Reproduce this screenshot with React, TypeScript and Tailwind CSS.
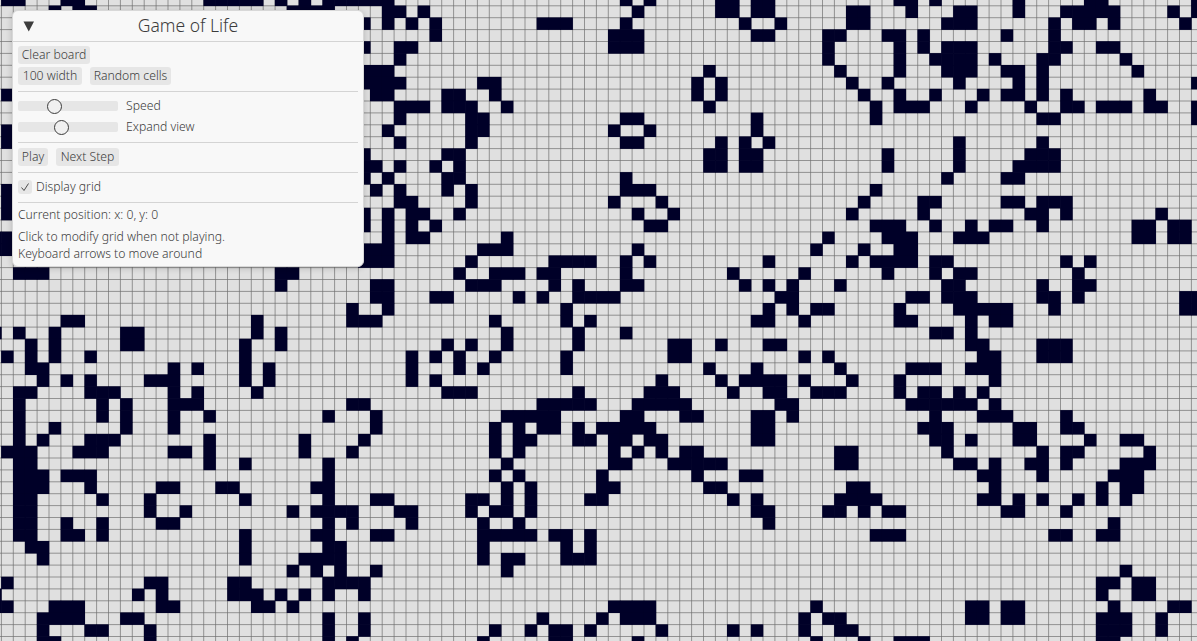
const ROWS = [
  "1-2,6-7,18-22,24,26,28-33,53,55,61-62,64-65,76-77,79,86,92-93,101",
  "5,7-8,25-28,33-34,36,54,61-62,64-65,72-73,77,81-82,86,90-94,99,101",
  "31,33,35,37,46-48,53,63,66,72-73,80-82,89,91-92,94,100",
  "37,52-54,64-65,70-71,75-76,78,85,89",
  "31,34-35,52-54,70,76,78,80-82,89-90,93-94",
  "34,70,76,79-82,84,88-89,95",
  "31-33,60,71,76,80-82,85-86,88,96",
  "31-34,41-42,59,61,72,75,81,86,88,101",
  "1,32-33,38-39,42,59,61,73,76,79,83,85-86,88,90,97",
  "34-36,38-40,43,60,74,76-78,82,87,90-91,93-95,97-98,101",
  "34,40-41,53-54,64,74,88-89,101",
  "1,33,40-41,52,55,64",
  "1,34,40,53-54,61,63,65,81,88",
  "31,38-39,60-61,63-64,75,81,87-89",
  "31-32,34,37,39,60-61,63-64,75,81,86-89",
  "31,33,38-39,53,80,85-86",
  "1,32,34,38,40,53-55,74",
  "1,34-35,40,52,56,73,78-79,85-86,88-90",
  "1,31,33,35-36,39,54,57,72,78,87-88,90,98",
  "31,33,35,37,55-56,74-76,79,82,84-85,88,96-97,99-100",
  "0-1,33,35-36,43,70,75-77,81-83,96-97,99-100",
  "0-1,31-33,41-43,54,69,73,76-77",
  "31-33,40,47-50,53,55,65,72,74-77,79-80,90,92",
  "2-4,24-25,39,42-44,46-47,53,62,68,75,79,81-82,91",
  "24,32-33,40-42,47,49,53-54,63,65,67,71,80-81,88,91-92",
  "32-33,37-38,44,46,49-52,66-67,77-78,80-82,88-89,91,100-101",
  "30,33,48,65,67,69-70,76,81-85,89,100-101",
  "6-7,22,30-32,42,48,50,64-65,68,76-77,82,84-85",
  "0,2,5,11-12,22,24,43,49,53,79-80,82",
  "3,5,11-12,21,24,38,40,43,49,57-58,61,65-66,82-83,88-90",
  "1,3,5,8,21,35,37,39,42,48,57-58,68,70,83-84,88-90",
  "3-4,15,17,21,23,35,39,41,48,60,64,71,77-79,82-84",
  "4,6,8,13-15,21,23,35,37,56,61,63-66,68,72,76,84",
  "2-3,8-10,15,17,22,38-40,49,55-57,62,65-66,69-71,76,78-79,81,83",
  "2,9,11,15-17,30-31,46-50,54-58,66-67,77-82,84",
  "2,9,11,15,18,28,32,43-47,53-54,58-59,64-65,67,79,83-85,90",
  "2,5,11,15,32,42,44,46-47,49,51-55,64-65,78-80,86-87,90-91",
  "2,4,8-10,18,26,31,42,44-45,49-50,52-53,55-56,64-65,79-80,82,86-87,92,95-96",
  "1-3,7-9,15-16,18,26,30,42,44,52,54,56,58-59,71-72,80,88,90-91,97",
  "2-3,18,21,28,43,52-53,57-61,71-72,81-82,84,87-88,90,95-97",
  "2-4,6-8,28,42,44,51,59,63-64,83-84,88,94-96",
  "2-4,8,14-15,19-20,27-28,43,45,51-52,60-61,72-73,84,93,95-96",
  "2-3,9,13,21,28,32-33,40-41,43,45,50-51,62,64,71-74,83-84,86,88,91,93,95",
  "2-3,13,16,25,27-30,34-35,40,42-43,45,64-65,70-71,73,75-76,85-86,90",
  "2-3,6,9,14-15,28,30,35,41,44,65,94",
  "2-3,6-7,9,21,27-28,32-33,41-45,47-48,50,74-76,89-90,93-94",
  "3-4,21,28-29,41,48,50",
  "4,21,26-29,41,43-44,48-50",
  "25,27,29,32,43,95",
  "1,13-14,20-21,28-31,93-94,96-97",
  "0,12,14,20-22,24,26,28,31,93,96-97",
  "0-1,5-7,14-15,22-23,25,52-55,69,82-83,85-86,94,99-100",
  "4-7,11-12,28,31,46,51,53-55,68,70-71,82-83,85-86,93-95,98",
  "4,8-9,13,28,31,42,45,47-48,50,56,62,64,68,71-72,93-95,98",
  "4-5,13,28,30,41,47-48,54,69,73,76-78,93-94",
];

const CELL = 11.9;
const X0 = -10.5;
const Y0 = -6.1;
const BLEED = 0.3;

function parseRow(row: string): number[] {
  const out: number[] = [];
  for (const part of row.split(",")) {
    const [a, b] = part.split("-").map(Number);
    for (let c = a; c <= (b ?? a); c++) out.push(c);
  }
  return out;
}

function Board() {
  const vertical = Array.from({ length: 103 }, (_, i) => X0 + i * CELL);
  const horizontal = Array.from({ length: 56 }, (_, i) => Y0 + i * CELL);
  return (
    <svg className="block" width={1197} height={641} viewBox="0 0 1197 641">
      <rect width={1197} height={641} fill="#e0e0e0" />
      {vertical.map((x) => (
        <line key={x} x1={x} x2={x} y1={0} y2={641} stroke="#707070" strokeWidth={0.7} />
      ))}
      {horizontal.map((y) => (
        <line key={y} x1={0} x2={1197} y1={y} y2={y} stroke="#707070" strokeWidth={0.7} />
      ))}
      {ROWS.map((row, r) =>
        parseRow(row).map((c) => (
          <rect
            key={`${r}-${c}`}
            x={X0 + c * CELL - BLEED}
            y={Y0 + r * CELL - BLEED}
            width={CELL + 2 * BLEED}
            height={CELL + 2 * BLEED}
            fill="#000028"
          />
        )),
      )}
    </svg>
  );
}

function Btn({ label, size }: { label: string; size: string }) {
  return <span className={"flex h-[18px] items-center justify-center rounded-[3px] bg-[#e6e6e6] " + size}>{label}</span>;
}

function Slider({ label, handle }: { label: string; handle: string }) {
  return (
    <div className="flex h-[18px] items-center gap-[8px]">
      <div className="relative h-[10px] w-[100px] rounded-[2px] bg-[#e6e6e6]">
        <span
          className={"absolute top-[-2.5px] h-[15px] w-[15px] rounded-full border border-[#3c3c3c] bg-[#f0f0f0] " + handle}
        />
      </div>
      <span>{label}</span>
    </div>
  );
}

function Sep() {
  return <div className="h-px bg-[#d4d4d4]" />;
}

function Panel() {
  return (
    <div className="absolute left-[12px] top-[10px] flex h-[257px] w-[352px] flex-col rounded-[6px] border border-[#d8d8d8] bg-[#f8f8f8] font-['Noto_Sans',sans-serif] text-[12.2px] font-light leading-[16px] text-[#3c3c3c] shadow-[0_1px_6px_rgba(0,0,0,0.2)]">
      <div className="relative flex h-[30px] shrink-0 items-center justify-center pb-[3px] text-[17.5px]">
        <svg className="absolute left-[10px] top-[10px]" width={12} height={11} viewBox="0 0 12 11">
          <polygon points="0.5,0.5 11,0.5 5.75,10.5" fill="#3c3c3c" />
        </svg>
        <span>Game of Life</span>
      </div>
      <div className="h-[1px] shrink-0 bg-[#d4d4d4]" />
      <div className="flex grow flex-col px-[5px] pt-[4px]">
        <div className="flex">
          <Btn label="Clear board" size="w-[72px]" />
        </div>
        <div className="mt-[3px] flex gap-[8px]">
          <Btn label="100 width" size="w-[64px]" />
          <Btn label="Random cells" size="w-[81px]" />
        </div>
        <div className="mt-[6px]">
          <Sep />
        </div>
        <div className="mt-[5px]">
          <Slider label="Speed" handle="left-[28.5px]" />
        </div>
        <div className="mt-[3px]">
          <Slider label="Expand view" handle="left-[36px]" />
        </div>
        <div className="mt-[6px]">
          <Sep />
        </div>
        <div className="mt-[5px] flex gap-[8px]">
          <Btn label="Play" size="w-[30px]" />
          <Btn label="Next Step" size="w-[63px]" />
        </div>
        <div className="mt-[6px]">
          <Sep />
        </div>
        <div className="mt-[7px] flex h-[14px] items-center gap-[4px]">
          <span className="flex h-[14px] w-[14px] items-center justify-center rounded-[3px] bg-[#e6e6e6]">
            <svg width={10} height={10} viewBox="0 0 10 10">
              <polyline points="1.5,5.5 4,8.5 8.5,1.5" fill="none" stroke="#3c3c3c" strokeWidth={0.9} />
            </svg>
          </span>
          <span>Display grid</span>
        </div>
        <div className="mt-[8px]">
          <Sep />
        </div>
        <div className="mt-[4px]">Current position: x: 0, y: 0</div>
        <div className="mt-[6px]">Click to modify grid when not playing.</div>
        <div className="mt-[1px]">Keyboard arrows to move around</div>
      </div>
    </div>
  );
}

export default function App() {
  return (
    <div className="relative h-[641px] w-[1197px] overflow-hidden">
      <Board />
      <Panel />
    </div>
  );
}
